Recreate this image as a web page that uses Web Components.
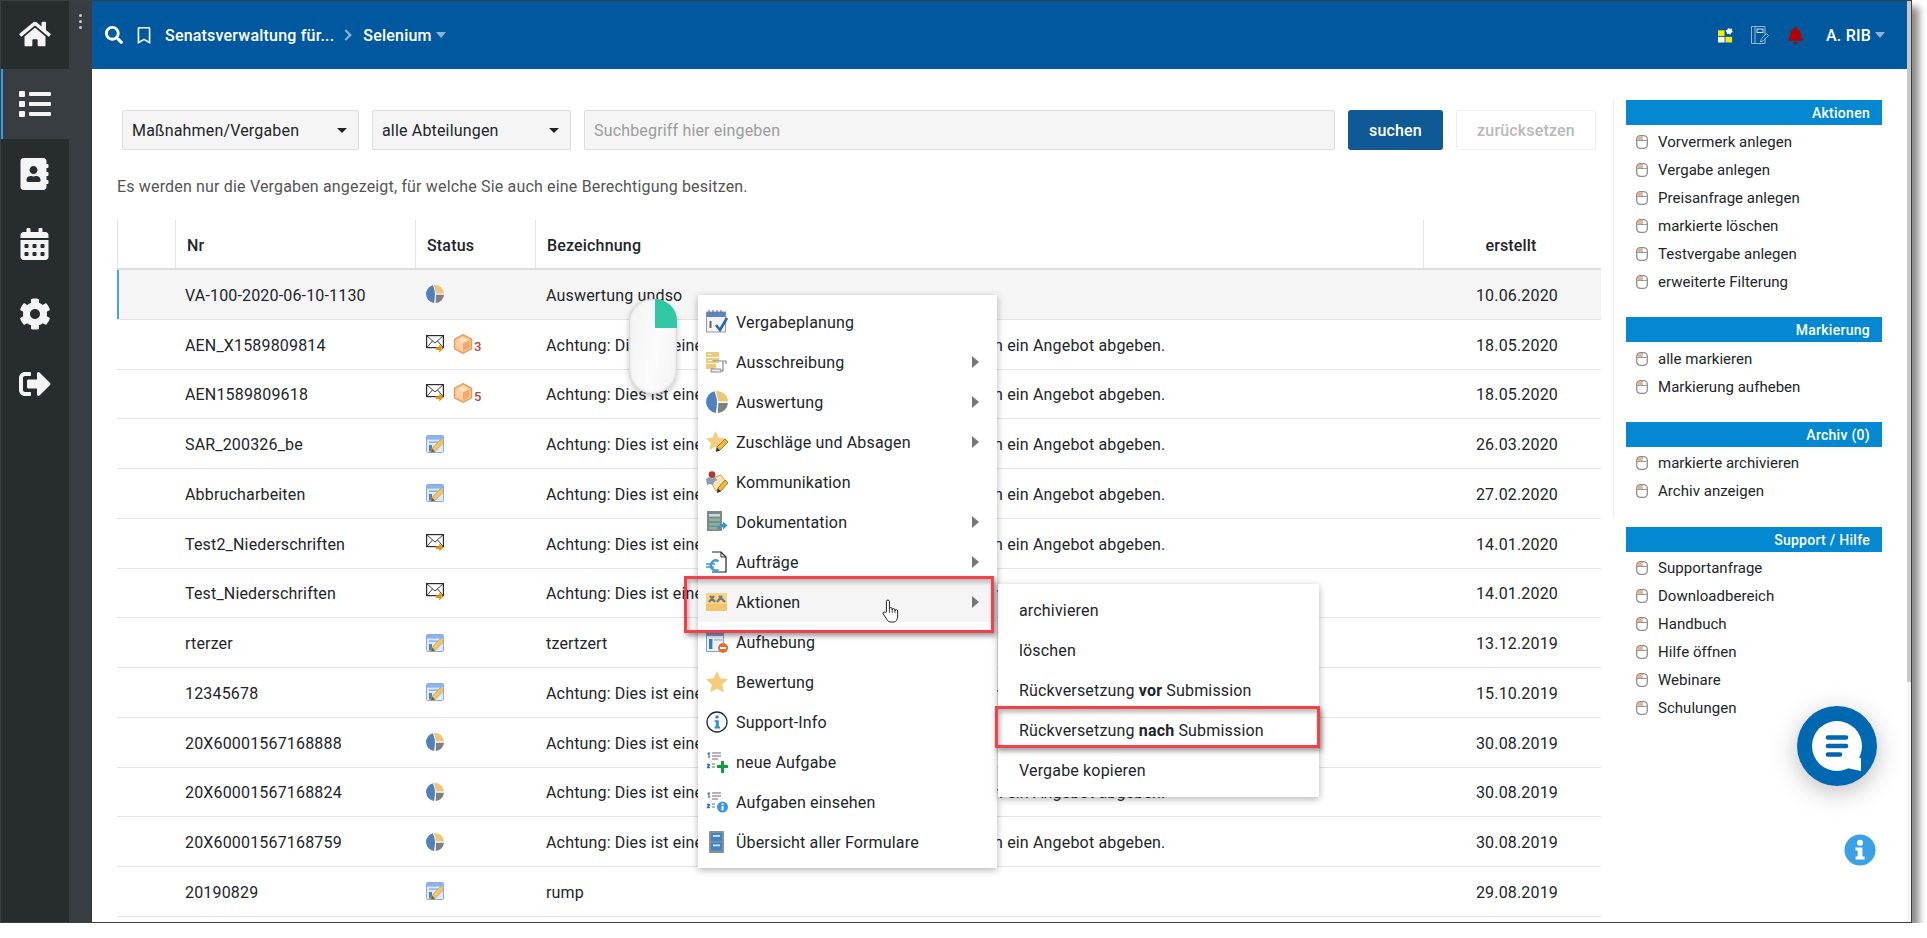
<!DOCTYPE html>
<html lang="de">
<head>
<meta charset="utf-8">
<title>Vergaben</title>
<style>
    html, body { margin: 0; padding: 0; background: #fff; }
    body { font-family: Roboto, "Liberation Sans", sans-serif; font-size: 16px; color: #212529; }
</style>
</head>
<body>
<app-frame></app-frame>

<script>
const FA = (vb, d) => `<svg viewBox="${vb}"><path fill="currentColor" d="${d}"/></svg>`;

const ICONS = {
    home: FA('0 0 576 512', 'M280.37 148.26L96 300.11V464a16 16 0 0 0 16 16l112.06-.29a16 16 0 0 0 15.92-16V368a16 16 0 0 1 16-16h64a16 16 0 0 1 16 16v95.64a16 16 0 0 0 16 16.05L464 480a16 16 0 0 0 16-16V300L295.67 148.26a12.19 12.19 0 0 0-15.3 0zM571.6 251.47L488 182.56V44.05a12 12 0 0 0-12-12h-56a12 12 0 0 0-12 12v72.61L318.47 43a48 48 0 0 0-61 0L4.34 251.47a12 12 0 0 0-1.6 16.9l25.5 31A12 12 0 0 0 45.15 301l235.22-193.74a12.19 12.19 0 0 1 15.3 0L530.9 301a12 12 0 0 0 16.9-1.6l25.5-31a12 12 0 0 0-1.7-16.93z'),
    list: FA('0 0 512 512', 'M80 368H16a16 16 0 0 0-16 16v64a16 16 0 0 0 16 16h64a16 16 0 0 0 16-16v-64a16 16 0 0 0-16-16zm0-320H16A16 16 0 0 0 0 64v64a16 16 0 0 0 16 16h64a16 16 0 0 0 16-16V64a16 16 0 0 0-16-16zm0 160H16a16 16 0 0 0-16 16v64a16 16 0 0 0 16 16h64a16 16 0 0 0 16-16v-64a16 16 0 0 0-16-16zm416 176H176a16 16 0 0 0-16 16v32a16 16 0 0 0 16 16h320a16 16 0 0 0 16-16v-32a16 16 0 0 0-16-16zm0-320H176a16 16 0 0 0-16 16v32a16 16 0 0 0 16 16h320a16 16 0 0 0 16-16V80a16 16 0 0 0-16-16zm0 160H176a16 16 0 0 0-16 16v32a16 16 0 0 0 16 16h320a16 16 0 0 0 16-16v-32a16 16 0 0 0-16-16z'),
    contacts: FA('0 0 448 512', 'M436 160c6.6 0 12-5.4 12-12v-40c0-6.6-5.4-12-12-12h-20V48c0-26.5-21.5-48-48-48H48C21.5 0 0 21.5 0 48v416c0 26.5 21.5 48 48 48h320c26.5 0 48-21.5 48-48v-48h20c6.6 0 12-5.4 12-12v-40c0-6.6-5.4-12-12-12h-20v-64h20c6.6 0 12-5.4 12-12v-40c0-6.6-5.4-12-12-12h-20v-64h20zm-228-32c35.3 0 64 28.7 64 64s-28.7 64-64 64-64-28.7-64-64 28.7-64 64-64zm112 236.8c0 10.6-10 19.2-22.4 19.2H118.4C106 384 96 375.4 96 364.8v-19.2c0-31.8 30.1-57.6 67.2-57.6h5c12.3 5.1 25.7 8 39.8 8s27.6-2.9 39.8-8h5c37.1 0 67.2 25.8 67.2 57.6v19.2z'),
    calendar: FA('0 0 448 512', 'M0 464c0 26.5 21.5 48 48 48h352c26.5 0 48-21.5 48-48V192H0v272zm320-196c0-6.6 5.4-12 12-12h40c6.6 0 12 5.4 12 12v40c0 6.6-5.4 12-12 12h-40c-6.6 0-12-5.4-12-12v-40zm0 128c0-6.6 5.4-12 12-12h40c6.6 0 12 5.4 12 12v40c0 6.6-5.4 12-12 12h-40c-6.6 0-12-5.4-12-12v-40zM192 268c0-6.6 5.4-12 12-12h40c6.6 0 12 5.4 12 12v40c0 6.6-5.4 12-12 12h-40c-6.6 0-12-5.4-12-12v-40zm0 128c0-6.6 5.4-12 12-12h40c6.6 0 12 5.4 12 12v40c0 6.6-5.4 12-12 12h-40c-6.6 0-12-5.4-12-12v-40zM64 268c0-6.6 5.4-12 12-12h40c6.6 0 12 5.4 12 12v40c0 6.6-5.4 12-12 12H76c-6.6 0-12-5.4-12-12v-40zm0 128c0-6.6 5.4-12 12-12h40c6.6 0 12 5.4 12 12v40c0 6.6-5.4 12-12 12H76c-6.6 0-12-5.4-12-12v-40zM400 64h-48V16c0-8.8-7.2-16-16-16h-32c-8.8 0-16 7.2-16 16v48H160V16c0-8.8-7.2-16-16-16h-32c-8.8 0-16 7.2-16 16v48H48C21.5 64 0 85.5 0 112v48h448v-48c0-26.5-21.5-48-48-48z'),
    cog: FA('0 0 512 512', 'M487.4 315.7l-42.6-24.6c4.3-23.2 4.3-47 0-70.2l42.6-24.6c4.9-2.8 7.1-8.6 5.5-14-11.1-35.6-30-67.8-54.7-94.6-3.8-4.1-10-5.1-14.8-2.3L380.8 110c-17.9-15.4-38.5-27.3-60.8-35.1V25.8c0-5.6-3.9-10.5-9.4-11.7-36.7-8.2-74.3-7.8-109.2 0-5.5 1.2-9.4 6.1-9.4 11.7V75c-22.2 7.9-42.8 19.8-60.8 35.1L88.7 85.5c-4.9-2.8-11-1.9-14.8 2.3-24.7 26.7-43.6 58.9-54.7 94.6-1.7 5.4.6 11.2 5.5 14L67.3 221c-4.3 23.2-4.3 47 0 70.2l-42.6 24.6c-4.9 2.8-7.1 8.6-5.5 14 11.1 35.6 30 67.8 54.7 94.6 3.8 4.1 10 5.1 14.8 2.3l42.6-24.6c17.9 15.4 38.5 27.3 60.8 35.1v49.2c0 5.6 3.9 10.5 9.4 11.7 36.7 8.2 74.3 7.8 109.2 0 5.5-1.2 9.4-6.1 9.4-11.7v-49.2c22.2-7.9 42.8-19.8 60.8-35.1l42.6 24.6c4.9 2.8 11 1.9 14.8-2.3 24.7-26.7 43.6-58.9 54.7-94.6 1.5-5.5-.7-11.3-5.6-14.1zM256 336c-44.1 0-80-35.9-80-80s35.9-80 80-80 80 35.9 80 80-35.9 80-80 80z'),
    signout: FA('0 0 512 512', 'M497 273L329 441c-15 15-41 4.5-41-17v-96H152c-13.3 0-24-10.7-24-24v-96c0-13.3 10.7-24 24-24h136V88c0-21.4 25.9-32 41-17l168 168c9.3 9.4 9.3 24.6 0 34zM192 436v-40c0-6.6-5.4-12-12-12H96c-17.7 0-32-14.3-32-32V160c0-17.7 14.3-32 32-32h84c6.6 0 12-5.4 12-12V76c0-6.6-5.4-12-12-12H96c-53 0-96 43-96 96v192c0 53 43 96 96 96h84c6.6 0 12-5.4 12-12z'),
    search: FA('0 0 512 512', 'M505 442.7L405.3 343c-4.5-4.5-10.6-7-17-7H372c27.6-35.3 44-79.7 44-128C416 93.1 322.9 0 208 0S0 93.1 0 208s93.1 208 208 208c48.3 0 92.7-16.4 128-44v16.3c0 6.4 2.5 12.5 7 17l99.7 99.7c9.4 9.4 24.6 9.4 33.9 0l28.3-28.3c9.4-9.4 9.4-24.6.1-34zM208 336c-70.7 0-128-57.2-128-128 0-70.7 57.2-128 128-128 70.7 0 128 57.2 128 128 0 70.7-57.2 128-128 128z'),
    bookmark: FA('0 0 384 512', 'M336 0H48C21.49 0 0 21.49 0 48v464l192-112 192 112V48c0-26.51-21.49-48-48-48zm0 428.43l-144-84-144 84V54a6 6 0 0 1 6-6h276c3.314 0 6 2.683 6 5.996V428.43z'),
    bell: FA('0 0 448 512', 'M224 512c35.32 0 63.97-28.65 63.97-64H160.03c0 35.35 28.65 64 63.97 64zm215.39-149.71c-19.32-20.76-55.47-51.99-55.47-154.29 0-77.7-54.48-139.9-127.94-155.16V32c0-17.67-14.32-32-31.98-32s-31.98 14.33-31.98 32v20.84C118.56 68.1 64.08 130.3 64.08 208c0 102.3-36.15 133.53-55.47 154.29-6 6.45-8.66 14.16-8.61 21.71.11 16.4 12.98 32 32.1 32h383.8c19.12 0 32-15.6 32.1-32 .05-7.55-2.61-15.27-8.61-21.71z'),
    tiles: `<svg viewBox="0 0 16 16"><rect x="0" y="3" width="7" height="6" fill="#f6ec00"/><rect x="8" y="10" width="7" height="6" fill="#f6ec00"/><rect x="0" y="10" width="7" height="6" fill="#fff"/><path d="M11.5 0.5l1.5 1 2-.4-.2 2 1 1.6-1.8.8-.6 2-1.9-.8-1.9.3-.2-2-1.2-1.5 1.5-1.2z" fill="#fff"/></svg>`,
    notes: `<svg viewBox="0 0 18 18" fill="none" stroke="#9cb6d2" stroke-width="1"><path d="M4 .5H14V9M14 12V17.5H.5V.5H4V17.5"/><rect x="6" y="3" width="6" height="3.5" stroke="#d3dfea"/><path d="M9.5 16L10.5 12.5L15.5 7.5L17.5 9.5L12.5 14.5Z"/></svg>`,
    pie: `<svg viewBox="0 0 18 18"><path d="M6.8 .3A9 9 0 0 0 8 17.95C8.8 14 8.8 13 9 9C9 6 8 3 6.8 .3Z" fill="#4f81bd"/><path d="M7.8 0A9 9 0 0 1 18 8.6L9.8 8.6C9.6 5.5 8.8 2.8 7.8 0Z" fill="#eec67a"/><path d="M10 9.8H18A9 9 0 0 1 9.6 18C10 15 10 12.5 10 9.8Z" fill="#7f7f7f"/></svg>`,
    mail: `<svg viewBox="0 0 18 18"><rect x=".6" y=".6" width="16.8" height="12" fill="#fff" stroke="#2b2b2b" stroke-width="1.2"/><path d="M.8 .8L9 8L17.2 .8M1 12.4L6.4 6M17 12.4L11.6 6" fill="none" stroke="#2b2b2b" stroke-width=".9"/><path d="M9.8 12.2H13.2V9.6L17.6 13.6L13.2 17.6V15H9.8Z" fill="#e8940a"/></svg>`,
    box: `<svg viewBox="0 0 20 20"><path d="M10 .6L18.6 5V15L10 19.4L1.4 15V5Z" fill="#f9c08c" stroke="#e69a59" stroke-width="1.2"/><path d="M10 3L16.5 6.2L10 9.5L3.5 6.2Z" fill="#fde0c4"/><path d="M10 9.5V17L3.5 13.6V6.2Z" fill="#fbd0a8"/><path d="M10 9.5V17L16.5 13.6V6.2Z" fill="#f4a868"/></svg>`,
    form: `<svg viewBox="0 0 18 18"><rect x=".5" y=".5" width="17" height="17" rx="1" fill="#dfeafa" stroke="#84aee6"/><rect x="1" y="1" width="16" height="3.6" fill="#8db4ea"/><rect x="3" y="6.4" width="9" height="1.6" fill="#8db4ea"/><rect x="3" y="10" width="3" height="6.5" fill="#4f81bd"/><path d="M5.2 17.6L6 13.6L14.5 4.5L17.8 7.4L9 16.5Z" fill="#f2c66a" stroke="#c9923a" stroke-width=".7"/><path d="M5.2 17.6L6 13.6L9 16.5Z" fill="#7a5a2a"/></svg>`,
    plan: `<svg viewBox="0 0 22 26"><rect x=".5" y="3" width="19" height="20" fill="#f4f4f4" stroke="#9a9a9a"/><rect x=".5" y="3" width="19" height="5" fill="#5a86c8"/><path d="M3 1v4M7 1v4M11 1v4M15 1v4" stroke="#777" stroke-width="1.2"/><rect x="3.5" y="12" width="2" height="7" fill="#666"/><path d="M10 16L14 21L21 9" fill="none" stroke="#2465b5" stroke-width="2.6"/></svg>`,
    tender: `<svg viewBox="0 0 22 22"><rect x="0" y="1" width="13" height="5" fill="#f0c878"/><rect x="0" y="7" width="13" height="5" fill="#f0c878"/><rect x="0" y="13" width="10" height="5" fill="#f0c878"/><path d="M2 3.5h4M2 9.5h4" stroke="#fff"/><path d="M7 10H20V13M17 10V20H6" fill="#fff" stroke="#8a8a8a" stroke-width="1.2"/><path d="M5 18H15V21H5Z" fill="#eee" stroke="#8a8a8a"/></svg>`,
    award: `<svg viewBox="0 0 22 22"><path d="M9.5 0L12.4 6.4L19.5 7.2L14.2 12L15.6 19L9.5 15.5L3.4 19L4.8 12L0 7.2L6.6 6.4Z" fill="#f2cf7c"/><path d="M10 20L11 16L19 8L22 11L14 19Z" fill="#f2b93a" stroke="#6b5520" stroke-width=".7"/><path d="M10 21L11 16.4L14 19.4Z" fill="#333"/></svg>`,
    comm: `<svg viewBox="0 0 22 22"><path d="M3 8L15 4L21 12L10 20Z" fill="#f6e2b4" stroke="#c9a75e"/><circle cx="6" cy="3.6" r="3.4" fill="#b33a2a"/><path d="M0 8l3-2 3 2 3-2 2 3-3 2-1 3-3-1-3 1z" fill="#8b9cb4"/><path d="M11 21L12 17L19 9L22 12L15 20Z" fill="#f2b93a" stroke="#6b5520" stroke-width=".7"/><path d="M11 22L12 17.6L15 20.4Z" fill="#333"/></svg>`,
    doc: `<svg viewBox="0 0 22 22"><rect x="1" y="0" width="15" height="20" fill="#7d8a8a"/><rect x="3" y="3" width="11" height="2.6" fill="#cfd8d4"/><rect x="3" y="7.5" width="11" height="2.6" fill="#7fb79a"/><rect x="3" y="12" width="11" height="2.6" fill="#7fb79a"/><rect x="3" y="16" width="8" height="2.4" fill="#7fb79a"/><path d="M12 18C12 14 15 13 17 13V10.5L21.5 14.5L17 18.5V16C15 16 13.5 17 12 18Z" fill="#3f8fd6"/></svg>`,
    order: `<svg viewBox="0 0 22 22" fill="none"><path d="M6 1H15L20 6V21H6" stroke="#222" stroke-width="1.2"/><path d="M15 1V6H20" stroke="#222"/><path d="M12.5 10.2A5 5 0 1 0 12.5 18.8" stroke="#3a9be0" stroke-width="2.4"/><path d="M0 13H9M0 16H8" stroke="#3a9be0" stroke-width="1.6"/></svg>`,
    tools: `<svg viewBox="0 0 22 22"><rect x="0" y="2" width="21" height="18" fill="#f3d488"/><rect x="0" y="13" width="21" height="7" fill="#eec66b"/><path d="M3 11L8 5M4 5L9 11M11 11L16 5M13 5L19 11" stroke="#777" stroke-width="2.2"/></svg>`,
    cancel: `<svg viewBox="0 0 22 22"><rect x=".5" y=".5" width="17" height="20" fill="#eef3fb" stroke="#7fa3d8"/><rect x="1" y="1" width="16" height="4" fill="#7fa3d8"/><rect x="3" y="8" width="3.4" height="10" fill="#3f78c0"/><rect x="8" y="8" width="8" height="2" fill="#c0cfe6"/><circle cx="17" cy="17" r="5" fill="#e2702a"/><rect x="14" y="16" width="6" height="2" fill="#fff"/></svg>`,
    star: `<svg viewBox="0 0 22 22"><path d="M11 0L14.3 7.3L22 8.2L16.2 13.4L17.8 21.4L11 17.4L4.2 21.4L5.8 13.4L0 8.2L7.7 7.3Z" fill="#f4cd7a"/></svg>`,
    infoline: `<svg viewBox="0 0 22 22"><circle cx="11" cy="11" r="10" fill="#fff" stroke="#1d2b3a" stroke-width="1.3"/><circle cx="11" cy="6" r="1.8" fill="#2f8fd8"/><path d="M8.5 9.2H12.8V15.6H14V17.4H8.5V15.6H9.8V11H8.5Z" fill="#2f8fd8"/></svg>`,
    taskadd: `<svg viewBox="0 0 22 22"><path d="M1.5 3L3 2V7M1 13.5H4M1 16.5L4 13.5M1 16.5H4" fill="none" stroke="#2a70c0" stroke-width="1.3"/><path d="M6 2H15M6 5H15M6 8H12M6 13H9M6 16H9" stroke="#9a9a9a" stroke-width="1.4"/><path d="M15 10H18V14H22V17H18V22H15V17H11V14H15Z" fill="#11a03c"/></svg>`,
    taskinfo: `<svg viewBox="0 0 22 22"><path d="M1.5 3L3 2V7M1 13.5H4M1 16.5L4 13.5M1 16.5H4" fill="none" stroke="#2a70c0" stroke-width="1.3"/><path d="M6 2H15M6 5H15M6 8H12M6 13H9M6 16H9" stroke="#9a9a9a" stroke-width="1.4"/><circle cx="16.5" cy="16" r="5.5" fill="#3c98de"/><rect x="15.6" y="15" width="1.9" height="4.4" fill="#fff"/><rect x="15.6" y="12.4" width="1.9" height="1.7" fill="#fff"/></svg>`,
    binder: `<svg viewBox="0 0 22 22"><rect x="3" y="0" width="15" height="22" rx="1" fill="#8a8f94"/><rect x="5" y="2" width="11" height="8" fill="#3d84cc"/><rect x="5" y="11.5" width="11" height="8" fill="#3d84cc"/><rect x="7" y="4" width="7" height="1.8" fill="#d6e6f6"/><rect x="7" y="13.5" width="7" height="1.8" fill="#d6e6f6"/></svg>`,
    mouse: `<svg viewBox="0 0 12 14"><rect x=".7" y=".7" width="10.6" height="12.6" rx="3.6" fill="#fff" stroke="#8f8f8f" stroke-width="1.3"/><path d="M1.2 5.4H10.8" stroke="#8f8f8f" stroke-width="1"/><path d="M1.6 5V3.4A2.6 2.6 0 0 1 5.4 1.3V5Z" fill="#f2b184"/><path d="M6 1V5.4" stroke="#8f8f8f" stroke-width=".9"/></svg>`,
    hand: `<svg viewBox="0 0 18 24"><path d="M4.4 13V2.6a1.5 1.5 0 0 1 3 0V10a1.4 1.4 0 0 1 2.8 0v1a1.4 1.4 0 0 1 2.8 0v1a1.3 1.3 0 0 1 2.6 0v5c0 3-1.4 6-3.6 6H8.4c-2.4 0-3-2-4.4-4L1.2 15c-.9-1.6 1-2.6 2-1.6z" fill="#fff" stroke="#222" stroke-width="1"/><path d="M7.4 10v4M10.2 11v3M13 12v2" stroke="#222" stroke-width=".8"/></svg>`,
    chat: `<svg viewBox="0 0 80 80"><circle cx="40" cy="40" r="40" fill="#0067b1"/><circle cx="40" cy="40" r="25" fill="#fff"/><path d="M54 50L64 52V65L50 62Z" fill="#fff"/><path d="M31 31.5H49M31 40H49M31 48.5H43" stroke="#0067b1" stroke-width="4.6" stroke-linecap="round"/></svg>`,
    info: `<svg viewBox="0 0 32 32"><circle cx="16" cy="16" r="15.5" fill="#3ba1e6"/><circle cx="16" cy="8.7" r="3" fill="#fff"/><path d="M11.5 13.5H18.4V22.6H20.6V25.6H11.6V22.6H13.7V16.5H11.5Z" fill="#fff"/></svg>`
};

class AppIcon extends HTMLElement {
    connectedCallback() {
        const w = this.getAttribute('w') || 18;
        const h = this.getAttribute('h') || w;
        this.attachShadow({ mode: 'open' }).innerHTML = `
        <style>
            :host { display: inline-flex; flex: none; width: ${w}px; height: ${h}px; line-height: 0; }
            svg { width: 100%; height: 100%; display: block; overflow: visible; }
        </style>
        ${ICONS[this.getAttribute('name')] || ''}`;
    }
}
customElements.define('app-icon', AppIcon);

class SideNav extends HTMLElement {
    connectedCallback() {
        const items = [['home', 32, 28], ['list', 32, 32], ['contacts', 29, 32], ['calendar', 29, 32], ['cog', 32, 32], ['signout', 32, 32]];
        this.attachShadow({ mode: 'open' }).innerHTML = `
        <style>
            :host { display: flex; flex: none; width: 91px; background: #373d40; color: #f4f4f4; }
            .rail { width: 68px; background: #272c2f; }
            .item { height: 70px; display: flex; align-items: center; justify-content: center; box-sizing: border-box; padding-right: 1px; }
            .item.first { height: 68px; padding-bottom: 2px; }
            .item.active { background: #373d40; border-left: 2px solid #3b9be0; padding-right: 3px; }
            .dots { flex: 1; display: flex; flex-direction: column; align-items: center; gap: 2.4px; padding-top: 13px; }
            .dots i { width: 3.4px; height: 3.4px; border-radius: 50%; background: #c8cccd; }
        </style>
        <div class="rail">
            ${items.map(([n, w, h], i) => `<div class="item ${i === 0 ? 'first' : ''} ${i === 1 ? 'active' : ''}"><app-icon name="${n}" w="${w}" h="${h}"></app-icon></div>`).join('')}
        </div>
        <div class="dots"><i></i><i></i><i></i></div>`;
    }
}
customElements.define('side-nav', SideNav);

class TopBar extends HTMLElement {
    connectedCallback() {
        this.attachShadow({ mode: 'open' }).innerHTML = `
        <style>
            :host { display: flex; flex: none; height: 68px; align-items: center; background: #00599e; color: #fff; font-weight: 500; font-size: 16px; padding: 0 22px 0 13px; letter-spacing: .2px; }
            .crumb { margin-left: 14px; }
            .chev { width: 6px; height: 6px; border: solid #8fb3d3; border-width: 2px 2px 0 0; transform: rotate(45deg); margin: 0 13px 0 8px; }
            .caret { width: 0; height: 0; border: 5px solid transparent; border-top: 6px solid #8fb3d3; border-bottom: 0; margin-left: 4px; }
            .right { margin-left: auto; display: flex; align-items: center; }
        </style>
        <app-icon name="search" w="18"></app-icon>
        <app-icon name="bookmark" w="14" h="17" style="margin-left:14px"></app-icon>
        <span class="crumb">Senatsverwaltung für...</span>
        <span class="chev"></span>
        <span>Selenium</span>
        <span class="caret"></span>
        <div class="right">
            <app-icon name="tiles" w="15" h="16" style="margin-left:1px"></app-icon>
            <app-icon name="notes" w="18" style="margin-left:18px"></app-icon>
            <app-icon name="bell" w="15" h="17" style="margin-left:19px;color:#b30000"></app-icon>
            <span style="margin-left:23px">A. RIB</span>
            <span class="caret"></span>
        </div>`;
    }
}
customElements.define('top-bar', TopBar);

class FilterSelect extends HTMLElement {
    connectedCallback() {
        this.attachShadow({ mode: 'open' }).innerHTML = `
        <style>
            :host { display: flex; align-items: center; justify-content: space-between; box-sizing: border-box; height: 40px; background: #f5f5f5; border: 1px solid #ddd; border-radius: 2px; padding: 0 11px 0 9px; letter-spacing: var(--ls); color: #212529; }
            i { width: 0; height: 0; border: 5px solid transparent; border-top: 5px solid #222; border-bottom: 0; }
        </style>
        <slot></slot><i></i>`;
    }
}
customElements.define('filter-select', FilterSelect);

class FilterBar extends HTMLElement {
    connectedCallback() {
        this.attachShadow({ mode: 'open' }).innerHTML = `
        <style>
            :host { display: flex; gap: 13px; margin: 41px 5px 0 5px; }
            .search { flex: 1; box-sizing: border-box; height: 40px; background: #f5f5f5; border: 1px solid #ddd; border-radius: 2px; padding: 0 9px; display: flex; align-items: center; color: #9c9c9c; letter-spacing: var(--ls); }
            .btn { box-sizing: border-box; height: 40px; display: flex; align-items: center; justify-content: center; border-radius: 3px; font-weight: 500; letter-spacing: var(--ls); }
            .go { width: 95px; background: #0f5a96; color: #fff; }
            .reset { width: 140px; background: #fff; border: 1px solid #eee; color: #b9b9b9; }
        </style>
        <filter-select style="width:237px">Maßnahmen/Vergaben</filter-select>
        <filter-select style="width:199px">alle Abteilungen</filter-select>
        <div class="search">Suchbegriff hier eingeben</div>
        <div class="btn go">suchen</div>
        <div class="btn reset">zurücksetzen</div>`;
    }
}
customElements.define('filter-bar', FilterBar);

const COLS = '58px 240px 120px 888px 178px';

class TableHead extends HTMLElement {
    connectedCallback() {
        this.attachShadow({ mode: 'open' }).innerHTML = `
        <style>
            :host { display: grid; grid-template-columns: ${COLS}; height: 50px; box-sizing: border-box; border-bottom: 2px solid #ddd; font-weight: 500; color: #212529; letter-spacing: var(--ls); }
            div { display: flex; align-items: center; padding: 2px 0 0 11px; border-left: 1px solid #e4e4e4; }
            div:first-child { border-left: 0; }
            div:last-child { justify-content: center; padding: 2px 3px 0 0; }
        </style>
        <div></div><div>Nr</div><div>Status</div><div>Bezeichnung</div><div>erstellt</div>`;
    }
}
customElements.define('table-head', TableHead);

class TableRow extends HTMLElement {
    connectedCallback() {
        const a = n => this.getAttribute(n) || '';
        const status = a('status').split(' ').filter(Boolean);
        const marks = status.map(n => {
            if (n === 'box3' || n === 'box5') {
                return `<app-icon name="box" w="20" style="margin-left:9px;margin-top:-1px"></app-icon><b>${n.slice(3)}</b>`;
            }
            return `<app-icon name="${n}" w="18" style="margin-top:${n === 'mail' ? -1 : 0}px"></app-icon>`;
        }).join('');
        const name = a('tail')
            ? `<span class="lead">${a('name')}</span><span>${a('tail')}</span>`
            : `<span>${a('name')}</span>`;
        this.attachShadow({ mode: 'open' }).innerHTML = `
        <style>
            :host { display: grid; grid-template-columns: ${COLS}; height: 49.75px; box-sizing: border-box; border-bottom: 1px solid #e4e4e4; letter-spacing: var(--ls); color: #212529; }
            :host([selected]) { background: #f5f5f5; box-shadow: inset 2px 0 0 #42a5e5; }
            div { display: flex; align-items: center; padding: 2px 0 0 11px; white-space: nowrap; }
            .nr { padding-left: 10px; }
            .st { padding-top: 0; }
            b { font-size: 13px; color: #a84b4b; margin-top: 5px; margin-left: 1px; font-weight: 500; }
            .lead { width: 448px; flex: none; }
            .date { justify-content: flex-end; padding: 2px 43px 0 0; }
        </style>
        <div></div><div class="nr">${a('nr')}</div><div class="st">${marks}</div><div>${name}</div><div class="date">${a('date')}</div>`;
    }
}
customElements.define('table-row', TableRow);

class PanelBlock extends HTMLElement {
    connectedCallback() {
        const items = (this.getAttribute('items') || '').split('|');
        this.attachShadow({ mode: 'open' }).innerHTML = `
        <style>
            :host { display: block; width: 256px; }
            h3 { margin: 0; height: 25px; line-height: 26px; background: #0388d1; color: #fff; font-size: 14px; font-weight: 500; text-align: right; padding-right: 12px; letter-spacing: .28px; }
            ul { list-style: none; margin: 0; padding: 3px 0 0; }
            :host([tight]) ul { padding: 2px 0 1px; }
            li { height: 28px; display: flex; align-items: center; padding-left: 10px; gap: 10px; font-size: 15px; letter-spacing: .03px; color: #212529; }
        </style>
        <h3><slot></slot></h3>
        <ul>${items.map(t => `<li><app-icon name="mouse" w="12" h="14"></app-icon>${t}</li>`).join('')}</ul>`;
    }
}
customElements.define('panel-block', PanelBlock);

class SidePanel extends HTMLElement {
    connectedCallback() {
        this.attachShadow({ mode: 'open' }).innerHTML = `
        <style>
            :host { display: block; flex: none; width: 294px; margin-top: 31px; box-sizing: border-box; }
            .lined { border-left: 1px solid #eee; padding: 0 0 11px 12px; height: 417px; box-sizing: border-box; display: flex; flex-direction: column; gap: 21px; }
            .rest { padding: 10px 0 0 13px; }
        </style>
        <div class="lined">
            <panel-block items="Vorvermerk anlegen|Vergabe anlegen|Preisanfrage anlegen|markierte löschen|Testvergabe anlegen|erweiterte Filterung">Aktionen</panel-block>
            <panel-block items="alle markieren|Markierung aufheben">Markierung</panel-block>
            <panel-block tight items="markierte archivieren|Archiv anzeigen">Archiv (0)</panel-block>
        </div>
        <div class="rest">
            <panel-block tight items="Supportanfrage|Downloadbereich|Handbuch|Hilfe öffnen|Webinare|Schulungen">Support / Hilfe</panel-block>
        </div>`;
    }
}
customElements.define('side-panel', SidePanel);

class MenuItem extends HTMLElement {
    connectedCallback() {
        const icon = this.getAttribute('icon');
        this.attachShadow({ mode: 'open' }).innerHTML = `
        <style>
            :host { display: flex; align-items: center; height: 40px; padding: 0 18px 0 8px; color: #212529; letter-spacing: var(--ls); white-space: nowrap; }
            :host([plain]) { padding-left: 21px; }
            :host([hover]) { background: #f5f5f5; }
            .ic { width: 30px; display: flex; }
            .ar { margin-left: auto; width: 0; height: 0; border: 6px solid transparent; border-left: 7px solid #777; border-right: 0; }
        </style>
        ${icon ? `<span class="ic"><app-icon name="${icon}" w="22" h="${icon === 'plan' ? 26 : 22}"></app-icon></span>` : ''}
        <span><slot></slot></span>
        ${this.hasAttribute('sub') ? '<span class="ar"></span>' : ''}`;
    }
}
customElements.define('menu-item', MenuItem);

class PopMenu extends HTMLElement {
    connectedCallback() {
        this.attachShadow({ mode: 'open' }).innerHTML = `
        <style>
            :host { display: block; position: absolute; box-sizing: border-box; background: #fff; box-shadow: 0 2px 7px rgba(0,0,0,.3); z-index: 5; }
        </style>
        <slot></slot>`;
    }
}
customElements.define('pop-menu', PopMenu);

class CalloutBox extends HTMLElement {
    connectedCallback() {
        this.attachShadow({ mode: 'open' }).innerHTML = `
        <style>
            :host { display: block; position: absolute; box-sizing: border-box; border: 3px solid #f0424a; box-shadow: 2px 3px 5px rgba(0,0,0,.4), inset 2px 3px 5px rgba(0,0,0,.3); z-index: 8; }
        </style>`;
    }
}
customElements.define('callout-box', CalloutBox);

class MouseHint extends HTMLElement {
    connectedCallback() {
        this.attachShadow({ mode: 'open' }).innerHTML = `
        <style>
            :host { display: block; position: absolute; left: 628px; top: 298px; width: 48px; height: 95px; border-radius: 22px 22px 24px 24px; background: linear-gradient(100deg, #f3f3f3, #fbfbfb 55%, #f3f3f3); box-shadow: 0 3px 6px rgba(0,0,0,.22), inset 0 0 3px rgba(0,0,0,.3); overflow: hidden; z-index: 6; }
            .btn { position: absolute; right: 0; top: 0; width: 22px; height: 29px; background: #2fc7a6; }
        </style>
        <div class="btn"></div>`;
    }
}
customElements.define('mouse-hint', MouseHint);

class AppFrame extends HTMLElement {
    connectedCallback() {
        const tail = 'n ein Angebot abgeben.';
        const lead = 'Achtung: Dies ist eine';
        const rows = [
            ['VA-100-2020-06-10-1130', 'pie', 'Auswertung undso', '', '10.06.2020', true],
            ['AEN_X1589809814', 'mail box3', lead, tail, '18.05.2020'],
            ['AEN1589809618', 'mail box5', lead, tail, '18.05.2020'],
            ['SAR_200326_be', 'form', lead, tail, '26.03.2020'],
            ['Abbrucharbeiten', 'form', lead, tail, '27.02.2020'],
            ['Test2_Niederschriften', 'mail', lead, tail, '14.01.2020'],
            ['Test_Niederschriften', 'mail', lead, tail, '14.01.2020'],
            ['rterzer', 'form', 'tzertzert', '', '13.12.2019'],
            ['12345678', 'form', lead, tail, '15.10.2019'],
            ['20X60001567168888', 'pie', lead, tail, '30.08.2019'],
            ['20X60001567168824', 'pie', lead, tail, '30.08.2019'],
            ['20X60001567168759', 'pie', lead, tail, '30.08.2019'],
            ['20190829', 'form', 'rump', '', '29.08.2019']
        ];
        const menu = [
            ['plan', 'Vergabeplanung', 0], ['tender', 'Ausschreibung', 1], ['pie', 'Auswertung', 1],
            ['award', 'Zuschläge und Absagen', 1], ['comm', 'Kommunikation', 0], ['doc', 'Dokumentation', 1],
            ['order', 'Aufträge', 1], ['tools', 'Aktionen', 1], ['cancel', 'Aufhebung', 0], ['star', 'Bewertung', 0],
            ['infoline', 'Support-Info', 0], ['taskadd', 'neue Aufgabe', 0], ['taskinfo', 'Aufgaben einsehen', 0], ['binder', 'Übersicht aller Formulare', 0]
        ];
        this.attachShadow({ mode: 'open' }).innerHTML = `
        <style>
            :host { --ls: .17px; display: flex; position: relative; width: 1912px; height: 923px; box-sizing: border-box; border: 1px solid #3a3f42; box-shadow: 7px 7px 7px rgba(0,0,0,.45); background: #fff; font-family: Roboto, "Liberation Sans", sans-serif; font-size: 16px; }
            .main { flex: 1; min-width: 0; display: flex; flex-direction: column; height: 921px; overflow: hidden; }
            .body { flex: 1; display: flex; min-height: 0; }
            .content { flex: 1; min-width: 0; padding: 0 12px 0 25px; }
            .note { margin: 26px 0 25px; height: 19px; line-height: 21px; color: #555; letter-spacing: var(--ls); }
            .scroll { flex: none; width: 4px; background: linear-gradient(#c8c8c8 0 681px, #f5f5f5 681px); }
            .shell { flex: 1; display: flex; min-width: 0; }
            .fab { position: absolute; z-index: 4; filter: drop-shadow(0 6px 12px rgba(0,0,0,.25)); }
            .hand { position: absolute; left: 881px; top: 598px; z-index: 7; }
        </style>
        <side-nav></side-nav>
        <div class="shell">
            <div class="main">
                <top-bar></top-bar>
                <div class="body">
                    <div class="content">
                        <filter-bar></filter-bar>
                        <div class="note">Es werden nur die Vergaben angezeigt, für welche Sie auch eine Berechtigung besitzen.</div>
                        <table-head></table-head>
                        ${rows.map(r => `<table-row nr="${r[0]}" status="${r[1]}" name="${r[2]}" tail="${r[3]}" date="${r[4]}" ${r[5] ? 'selected' : ''}></table-row>`).join('')}
                    </div>
                    <side-panel></side-panel>
                </div>
            </div>
            <div class="scroll"></div>
        </div>

        <app-icon class="fab" name="chat" w="80" style="left:1796px;top:705px"></app-icon>
        <app-icon class="fab" name="info" w="32" style="left:1843px;top:833px;filter:none"></app-icon>

        <pop-menu style="left:697px;top:294px;width:299px;padding:7px 0 6px">
            ${menu.map(m => `<menu-item icon="${m[0]}" ${m[2] ? 'sub' : ''} ${m[1] === 'Aktionen' ? 'hover' : ''}>${m[1]}</menu-item>`).join('')}
        </pop-menu>
        <pop-menu style="left:997px;top:583px;width:321px;padding:6px 0 7px">
            <menu-item plain>archivieren</menu-item>
            <menu-item plain>löschen</menu-item>
            <menu-item plain>Rückversetzung <b>vor</b> Submission</menu-item>
            <menu-item plain>Rückversetzung <b>nach</b> Submission</menu-item>
            <menu-item plain>Vergabe kopieren</menu-item>
        </pop-menu>
        <mouse-hint></mouse-hint>
        <app-icon class="hand" name="hand" w="18" h="24"></app-icon>
        <callout-box style="left:683px;top:575px;width:310px;height:57px"></callout-box>
        <callout-box style="left:994px;top:705px;width:325px;height:42px"></callout-box>`;
    }
}
customElements.define('app-frame', AppFrame);
</script>
</body>
</html>
